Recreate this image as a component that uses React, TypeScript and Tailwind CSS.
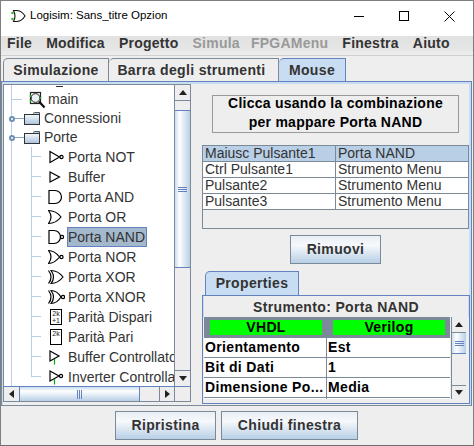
import React from "react";

const font = { fontFamily: '"Liberation Sans", Arial, sans-serif' };

function Gate({ kind }: { kind: string }) {
  const s = { stroke: "#000", strokeWidth: 1.2, fill: "none" } as const;
  const parts: Record<string, React.ReactNode> = {
    not: (<><path d="M2 2.5 L2 13.5 L11.5 8 Z" {...s} /><circle cx="13.5" cy="8" r="1.6" {...s} /></>),
    buffer: (<path d="M2 3 L2 13 L11.5 8 Z" {...s} />),
    and: (<path d="M1 1.5 H7 A6.5 6.5 0 0 1 7 14.5 H1 Z" {...s} />),
    nand: (<><path d="M1 1.5 H6 A6.5 6.5 0 0 1 6 14.5 H1 Z" {...s} /><circle cx="14" cy="8" r="1.6" {...s} /></>),
    or: (<path d="M0.5 1.5 Q5.5 8 0.5 14.5 Q8 14.5 13 8 Q8 1.5 0.5 1.5 Z" {...s} />),
    nor: (<><path d="M0.5 1.5 Q5.5 8 0.5 14.5 Q6.5 14.5 11.5 8 Q6.5 1.5 0.5 1.5 Z" {...s} /><circle cx="13.5" cy="8" r="1.6" {...s} /></>),
    xor: (<><path d="M3 1.5 Q8 8 3 14.5 Q10 14.5 15 8 Q10 1.5 3 1.5 Z" {...s} /><path d="M0.5 1.5 Q5.5 8 0.5 14.5" {...s} /></>),
    xnor: (<><path d="M3 1.5 Q8 8 3 14.5 Q9 14.5 13 8 Q9 1.5 3 1.5 Z" {...s} /><path d="M0.5 1.5 Q5.5 8 0.5 14.5" {...s} /><circle cx="15" cy="8" r="1.6" {...s} /></>),
    tbuf: (<><path d="M2 2 L2 12 L11 7 Z" {...s} /><path d="M6.5 10 V15.5" stroke="#0a0" strokeWidth="1.2" /></>),
    tinv: (<><path d="M2 2 L2 12 L11 7 Z" {...s} /><circle cx="13" cy="7" r="1.6" {...s} /><path d="M6.5 10 V15.5" stroke="#0a0" strokeWidth="1.2" /></>),
  };
  return <svg width="17" height="16" viewBox="0 0 17 16">{parts[kind]}</svg>;
}

function ParityIcon({ odd }: { odd: boolean }) {
  return (
    <span className="flex h-[16px] w-[12px] flex-col items-center border border-black bg-white text-[7px] leading-[7px] text-[#222]">
      <span>2k</span>
      {odd && <span>+1</span>}
    </span>
  );
}

function FolderIcon() {
  return (
    <svg width="16" height="13" viewBox="0 0 16 13" className="shrink-0">
      <defs>
        <linearGradient id="fold" x1="0" y1="0" x2="0" y2="1">
          <stop offset="0" stopColor="#f4f8fb" />
          <stop offset="1" stopColor="#a9c3dc" />
        </linearGradient>
      </defs>
      <path d="M9 1.5 L10.5 0.5 H15.5 V3" fill="#b8cfe5" stroke="#333" strokeWidth="0.8" />
      <rect x="0.5" y="2.5" width="15" height="10" fill="url(#fold)" stroke="#333" />
    </svg>
  );
}

function Handle() {
  return (
    <span className="flex w-[12px] shrink-0 items-center">
      <span className="-ml-[3px] h-[6px] w-[6px] shrink-0 rounded-full border-2 border-[#6d8fb3] bg-white" />
      <span className="h-px w-[9px] shrink-0 bg-[#8aa8c8]" />
    </span>
  );
}

function Leaf({ icon, label, selected, last }: { icon: React.ReactNode; label: string; selected?: boolean; last?: boolean }) {
  return (
    <div className="flex h-[20px] items-center">
      <span className="ml-[7px] h-full w-[20px] shrink-0 border-l border-[#b8cfe5]" />
      <span className={`w-[10px] shrink-0 border-l border-[#b8cfe5] ${last ? "h-[10px] self-start" : "self-stretch"}`}>
        <span className="block h-[10px] border-b border-[#b8cfe5]" />
      </span>
      <span className="ml-[7px] flex w-[19px] shrink-0 items-center justify-start">{icon}</span>
      <span className={`whitespace-nowrap leading-[18px] ${selected ? "border border-[#6382bf] bg-[#a3b8cc] pr-[1px]" : "pl-px"}`}>{label}</span>
    </div>
  );
}

function Arrow({ dir }: { dir: "up" | "down" | "left" | "right" }) {
  const pts = { up: "1,6 9,6 5,1", down: "1,1 9,1 5,6", left: "6,1 6,9 1,5", right: "1,1 1,9 6,5" }[dir];
  const horizontal = dir === "left" || dir === "right";
  return (
    <svg width={horizontal ? 7 : 10} height={horizontal ? 10 : 7} viewBox={horizontal ? "0 0 7 10" : "0 0 10 7"}>
      <polygon points={pts} fill="#222" />
    </svg>
  );
}

function ScrollBtn({ dir, cls }: { dir: "up" | "down" | "left" | "right"; cls: string }) {
  return <div className={`flex shrink-0 items-center justify-center bg-[#eeeeee] ${cls}`}><Arrow dir={dir} /></div>;
}

function Grip({ vertical }: { vertical?: boolean }) {
  return vertical ? (
    <div className="flex w-[9px] flex-col gap-px">
      <span className="h-px bg-[#6382bf]" /><span className="h-px bg-[#6382bf]" /><span className="h-px bg-[#6382bf]" />
    </div>
  ) : (
    <div className="flex h-[9px] gap-px">
      <span className="w-px bg-[#6382bf]" /><span className="w-px bg-[#6382bf]" /><span className="w-px bg-[#6382bf]" />
    </div>
  );
}

function JButton({ children, cls }: { children: React.ReactNode; cls: string }) {
  return (
    <div className={`flex items-center justify-center border border-[#7a8a99] bg-gradient-to-b from-[#e9eff5] via-[#f6f8fb] via-35% to-[#b8cfe5] text-[14px] font-bold tracking-[0.35px] text-[#333] ${cls}`}>
      {children}
    </div>
  );
}

const mappings = [
  ["Maiusc Pulsante1", "Porta NAND"],
  ["Ctrl Pulsante1", "Strumento Menu"],
  ["Pulsante2", "Strumento Menu"],
  ["Pulsante3", "Strumento Menu"],
];

const props = [
  ["Orientamento", "Est"],
  ["Bit di Dati", "1"],
  ["Dimensione Po...", "Media"],
];

export default function App() {
  return (
    <div style={font} className="flex h-[446px] w-[474px] flex-col border border-[#7f7f7f] border-b-[#6f6f6f] bg-[#eeeeee] text-[14px] text-[#333]">
      {/* Title bar */}
      <div className="flex h-[35px] shrink-0 items-center bg-white pb-[5px] text-black">
        <svg width="16" height="14" viewBox="0 0 16 14" className="ml-[9px]">
          <path d="M3.5 1.5 H7 Q12 2 15 7 Q12 12 7 12.5 H3.5 Q6.5 7 3.5 1.5 Z" fill="#fff" stroke="#111" strokeWidth="1.1" />
          <circle cx="2.5" cy="4" r="1.3" fill="#3b3" />
          <circle cx="2.5" cy="10" r="1.3" fill="#3b3" />
        </svg>
        <span className="ml-[4px] text-[11.5px]">Logisim: Sans_titre Opzion</span>
        <div className="ml-auto flex items-center">
          <span className="mr-[35px] h-px w-[10px] bg-black" />
          <span className="mr-[35px] h-[10px] w-[10px] border border-black" />
          <svg width="11" height="11" viewBox="0 0 11 11" className="mr-[18px]">
            <path d="M0.5 0.5 L10.5 10.5 M10.5 0.5 L0.5 10.5" stroke="#000" strokeWidth="1" />
          </svg>
        </div>
      </div>

      {/* Menu bar */}
      <div className="flex h-[20px] shrink-0 items-center gap-[14px] border-b border-[#d0d0d0] bg-gradient-to-b from-[#e2e2e2] via-[#e6e6e6] via-70% to-[#eeeeee] pb-[4px] pl-[6px] text-[14px] font-bold tracking-[0.25px]">
        <span>File</span>
        <span>Modifica</span>
        <span>Progetto</span>
        <span className="text-[#999]">Simula</span>
        <span className="-ml-[3px] text-[#999]">FPGAMenu</span>
        <span>Finestra</span>
        <span>Aiuto</span>
      </div>

      {/* Main tabs */}
      <div className="mt-[1px] flex h-[24px] shrink-0 items-end pl-[2px] font-bold tracking-[0.35px]">
        <div className="flex h-[23px] w-[106px] items-center justify-center rounded-tl-[5px] border border-b-0 border-[#7a8a99] bg-[#eeeeee]">Simulazione</div>
        <div className="flex h-[23px] w-[170px] items-center justify-center rounded-tl-[5px] border border-b-0 border-l-0 border-[#7a8a99] bg-[#eeeeee] pr-[4px]">Barra degli strumenti</div>
        <div className="flex h-[23px] w-[67px] items-center justify-center rounded-tl-[5px] border border-b-0 border-l-0 border-[#6382bf] bg-[#c8ddf2]">Mouse</div>
      </div>

      {/* Tab panel */}
      <div className="mr-px flex h-[325px] shrink-0 border border-[#6382bf] border-l-[#7a8a99] border-b-[#7a8a99] border-t-[#6382bf]">
        <div className="flex flex-1 gap-px border-[2px] border-l border-[#c8ddf2] border-b-0 bg-[#eeeeee]">
          {/* Tree */}
          <div className="flex h-[318px] w-[188px] shrink-0 flex-col border border-[#7a8a99] bg-white text-[14px] text-[#333]">
            <div className="flex min-h-0 flex-1">
              <div className="w-[171px] shrink-0 overflow-hidden border-r border-[#7a8a99]">
                <div className="flex h-[5px]">
                  <span className="ml-[7px] h-full w-px shrink-0 bg-[#b8cfe5]" />
                  <span className="ml-[44px] mt-px h-px w-[7px] shrink-0 bg-[#333]" />
                </div>
                <div className="flex h-[19px] items-center">
                  <span className="ml-[7px] h-full w-px shrink-0 bg-[#b8cfe5]" />
                  <span className="h-px w-[10px] shrink-0 bg-[#b8cfe5]" />
                  <svg width="17" height="18" viewBox="0 0 17 18" className="ml-[7px] shrink-0">
                    <rect x="1.5" y="1.5" width="10" height="11" fill="#fff" stroke="#222" strokeWidth="1.2" />
                    <circle cx="6.5" cy="7" r="4.4" fill="#e9f0f6" stroke="#222" />
                    <path d="M10 10.5 L15.5 16.5" stroke="#111" strokeWidth="2.2" />
                    <circle cx="1.5" cy="5" r="0.9" fill="#2b2" />
                    <circle cx="1.5" cy="10" r="0.9" fill="#2b2" />
                    <circle cx="11.5" cy="7" r="0.9" fill="#2b2" />
                  </svg>
                  <span className="ml-[2px]">main</span>
                </div>
                <div className="flex h-[19px] items-center">
                  <span className="ml-[7px] h-full w-px shrink-0 bg-[#b8cfe5]" />
                  <Handle />
                  <FolderIcon />
                  <span className="ml-[4px]">Connessioni</span>
                </div>
                <div className="flex h-[19px] items-center">
                  <span className="ml-[7px] h-full w-px shrink-0 bg-[#b8cfe5]" />
                  <Handle />
                  <FolderIcon />
                  <span className="ml-[4px]">Porte</span>
                </div>
                <Leaf icon={<Gate kind="not" />} label="Porta NOT" />
                <Leaf icon={<Gate kind="buffer" />} label="Buffer" />
                <Leaf icon={<Gate kind="and" />} label="Porta AND" />
                <Leaf icon={<Gate kind="or" />} label="Porta OR" />
                <Leaf icon={<Gate kind="nand" />} label="Porta NAND" selected />
                <Leaf icon={<Gate kind="nor" />} label="Porta NOR" />
                <Leaf icon={<Gate kind="xor" />} label="Porta XOR" />
                <Leaf icon={<Gate kind="xnor" />} label="Porta XNOR" />
                <Leaf icon={<span className="ml-[2px] block"><ParityIcon odd /></span>} label="Parità Dispari" />
                <Leaf icon={<span className="ml-[2px] block"><ParityIcon odd={false} /></span>} label="Parità Pari" />
                <Leaf icon={<Gate kind="tbuf" />} label="Buffer Controllato" />
                <Leaf icon={<Gate kind="tinv" />} label="Inverter Controllato" last />
              </div>
              {/* Vertical scrollbar */}
              <div className="flex w-[15px] shrink-0 flex-col bg-[#eeeeee]">
                <ScrollBtn dir="up" cls="h-[16px] border-b border-[#7a8a99]" />
                <div className="h-[9px] shrink-0" />
                <div className="flex h-[158px] shrink-0 items-center justify-center border-y border-[#6382bf] bg-gradient-to-r from-[#c8ddf2] via-white via-30% to-[#b8cfe5]"><Grip vertical /></div>
                <div className="flex-1" />
                <ScrollBtn dir="down" cls="h-[16px] border-t border-[#7a8a99]" />
              </div>
            </div>
            {/* Horizontal scrollbar */}
            <div className="flex h-[15px] shrink-0 border-t border-[#6382bf] bg-[#eeeeee]">
              <ScrollBtn dir="left" cls="w-[15px]" />
              <div className="flex w-[121px] shrink-0 items-center justify-center border-x border-[#6382bf] bg-gradient-to-b from-[#c8ddf2] via-white via-30% to-[#b8cfe5]"><Grip /></div>
              <div className="w-[19px] shrink-0" />
              <ScrollBtn dir="right" cls="w-[15px] border-l border-[#7a8a99]" />
              <div className="flex-1 border-l border-[#7a8a99]" />
            </div>
          </div>

          {/* Right side */}
          <div className="flex min-w-0 flex-1 flex-col pl-[10px] pr-0">
            <div className="ml-[10px] mt-[11px] flex h-[38px] w-[247px] shrink-0 items-center justify-center border border-[#999] text-center text-[14px] font-bold leading-[19px] tracking-[0.25px] text-black">
              <span className="-mt-[3px]">Clicca usando la combinazione<br />per mappare Porta NAND</span>
            </div>
            <div className="mt-[12px] h-[84px] w-[267px] shrink-0 border border-[#7a8a99] leading-[15px]">
              {mappings.map(([a, b], i) => (
                <div key={a} className={`grid h-[16px] grid-cols-[133px_1fr] border-b border-[#7a8a99] ${i === 0 ? "bg-[#b8cfe5]" : "bg-white"}`}>
                  <span className="border-r border-[#7a8a99] pl-[2px]">{a}</span>
                  <span className="pl-[2px]">{b}</span>
                </div>
              ))}
            </div>
            <JButton cls="ml-[88px] mt-[6px] h-[29px] w-[91px] shrink-0">Rimuovi</JButton>
            {/* Properties */}
            <div className="mt-[7px] flex min-h-0 flex-1 flex-col">
              <div className="ml-[3px] flex h-[24px] w-[94px] shrink-0 items-center justify-center rounded-tl-[5px] border border-b-0 border-[#6382bf] bg-[#c8ddf2] font-bold tracking-[0.35px]">Properties</div>
              <div className="-mr-[1px] mb-[1px] flex min-h-0 flex-1 flex-col border border-[#6382bf] border-t-[#6382bf]">
                <div className="flex h-[21px] shrink-0 items-center justify-center border-x border-[#c8ddf2] pt-[1px] font-bold tracking-[0.35px]">Strumento: Porta NAND</div>
                <div className="mb-[4px] flex min-h-0 flex-1 pl-[1px] pr-[3px] text-black">
                  <div className="flex min-w-0 flex-1 flex-col overflow-hidden bg-[#eeeeee]">
                    <div className="grid h-[21px] shrink-0 grid-cols-[123px_1fr] bg-[#7a8a99]">
                      <div className="ml-[6px] mr-[5px] mt-[3px] flex h-[15px] items-center justify-center bg-[#00ff00] font-bold tracking-[0.35px]">VHDL</div>
                      <div className="ml-[6px] mr-[5px] mt-[3px] flex h-[15px] items-center justify-center bg-[#00ff00] font-bold tracking-[0.35px]">Verilog</div>
                    </div>
                    {props.map(([a, b]) => (
                      <div key={a} className="grid h-[20px] shrink-0 grid-cols-[123px_1fr] border-b border-[#7a8a99] bg-white font-bold leading-[19px] tracking-[0.35px]">
                        <span className="border-r border-[#7a8a99] pl-[1px] whitespace-nowrap">{a}</span>
                        <span className="pl-[1px]">{b}</span>
                      </div>
                    ))}
                    <div className="grid h-[3px] shrink-0 grid-cols-[123px_1fr] bg-white">
                      <span className="border-r border-[#7a8a99]" />
                    </div>
                  </div>
                  <div className="ml-[1px] flex w-[15px] shrink-0 flex-col border-l border-[#7a8a99]">
                    <ScrollBtn dir="up" cls="h-[16px] border-b border-[#7a8a99]" />
                    <div className="flex h-[21px] shrink-0 items-center justify-center border-b border-[#6382bf] bg-gradient-to-r from-[#c8ddf2] via-white via-30% to-[#b8cfe5]"><Grip vertical /></div>
                    <div className="flex-1" />
                    <ScrollBtn dir="down" cls="h-[14px] border-t border-[#7a8a99]" />
                  </div>
                </div>
              </div>
            </div>
          </div>
        </div>
      </div>

      {/* Footer */}
      <div className="flex flex-1 items-center gap-[5px] pl-[114px]">
        <JButton cls="h-[29px] w-[101px]">Ripristina</JButton>
        <JButton cls="h-[29px] w-[137px]">Chiudi finestra</JButton>
      </div>
    </div>
  );
}
